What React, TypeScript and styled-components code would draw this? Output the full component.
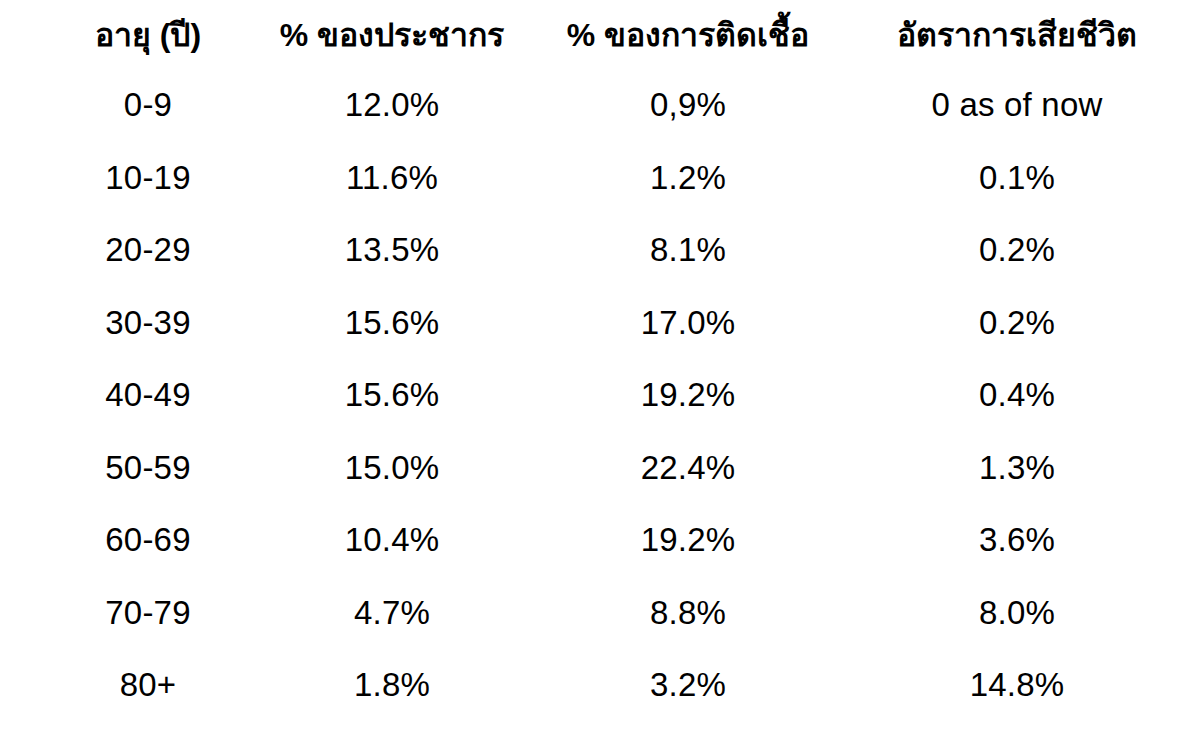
import styled, { createGlobalStyle } from "styled-components";

const GlobalStyle = createGlobalStyle`
  html, body {
    margin: 0;
    padding: 0;
    background: #ffffff;
  }
  body {
    font-family: "Liberation Sans", Arial, sans-serif;
    color: #000000;
    overflow: hidden;
  }
`;

const Page = styled.div`
  width: 1200px;
  height: 737px;
  overflow: hidden;
  background: #ffffff;
`;

const Table = styled.div`
  display: grid;
  grid-template-columns: 244px 244px 348px 310px;
  grid-template-rows: 69px;
  grid-auto-rows: 72.5px;
  padding-left: 26px;
`;

const HeadCell = styled.div`
  display: flex;
  align-items: center;
  justify-content: center;
  font-size: 32px;
  font-weight: 700;
  white-space: nowrap;
`;

const Cell = styled.div`
  display: flex;
  align-items: center;
  justify-content: center;
  font-size: 33px;
  letter-spacing: 0.2px;
  white-space: nowrap;
`;

const headers = ["อายุ (ปี)", "% ของประชากร", "% ของการติดเชื้อ", "อัตราการเสียชีวิต"];

const rows: string[][] = [
  ["0-9", "12.0%", "0,9%", "0 as of now"],
  ["10-19", "11.6%", "1.2%", "0.1%"],
  ["20-29", "13.5%", "8.1%", "0.2%"],
  ["30-39", "15.6%", "17.0%", "0.2%"],
  ["40-49", "15.6%", "19.2%", "0.4%"],
  ["50-59", "15.0%", "22.4%", "1.3%"],
  ["60-69", "10.4%", "19.2%", "3.6%"],
  ["70-79", "4.7%", "8.8%", "8.0%"],
  ["80+", "1.8%", "3.2%", "14.8%"],
];

function App() {
  return (
    <Page>
      <GlobalStyle />
      <Table>
        {headers.map((h) => (
          <HeadCell key={h}>{h}</HeadCell>
        ))}
        {rows.map((row) =>
          row.map((value, i) => <Cell key={row[0] + i}>{value}</Cell>)
        )}
      </Table>
    </Page>
  );
}

export default App;
